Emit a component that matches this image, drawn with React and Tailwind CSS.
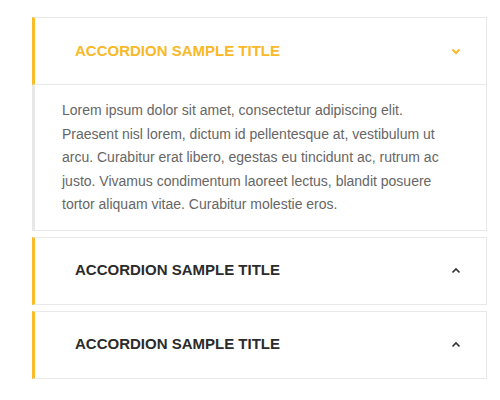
import { useState } from "react";

const items = [
    {
        title: "ACCORDION SAMPLE TITLE",
        body: "Lorem ipsum dolor sit amet, consectetur adipiscing elit. Praesent nisl lorem, dictum id pellentesque at, vestibulum ut arcu. Curabitur erat libero, egestas eu tincidunt ac, rutrum ac justo. Vivamus condimentum laoreet lectus, blandit posuere tortor aliquam vitae. Curabitur molestie eros.",
    },
    {
        title: "ACCORDION SAMPLE TITLE",
        body: "Lorem ipsum dolor sit amet, consectetur adipiscing elit.",
    },
    {
        title: "ACCORDION SAMPLE TITLE",
        body: "Lorem ipsum dolor sit amet, consectetur adipiscing elit.",
    },
];

function Chevron({ open }) {
    return (
        <svg width="10" height="7" viewBox="0 0 10 7" fill="none">
            {open ? (
                <polyline points="1.5,1.5 5,5 8.5,1.5" stroke="#f8b928" strokeWidth="2" />
            ) : (
                <polyline points="1.5,5.5 5,2 8.5,5.5" stroke="#333" strokeWidth="1.7" />
            )}
        </svg>
    );
}

export default function App() {
    const [open, setOpen] = useState(0);

    return (
        <div className="ml-[32px] mt-[17px] w-[455px] font-['Liberation_Sans',Arial,sans-serif]">
            {items.map((item, i) => (
                <div key={i} className={i > 0 ? "mt-[6px]" : ""}>
                    <button
                        onClick={() => setOpen(open === i ? -1 : i)}
                        className="flex w-full h-[68px] items-center justify-between border border-[#e8e8e8] border-l-[3px] border-l-[#f9bc2a] bg-white pl-[40px] pr-[25px] text-left"
                    >
                        <span className={"text-[15px] font-bold " + (open === i ? "text-[#f8b928]" : "text-[#2b2b2b]")}>
                            {item.title}
                        </span>
                        <Chevron open={open === i} />
                    </button>
                    {open === i && (
                        <div className="border-x border-b border-[#e8e8e8] border-l-[3px] pl-[27px] pr-[30px] pt-[14px] pb-[13px] text-[14px] leading-[23.5px] text-[#666]">
                            {item.body}
                        </div>
                    )}
                </div>
            ))}
        </div>
    );
}
